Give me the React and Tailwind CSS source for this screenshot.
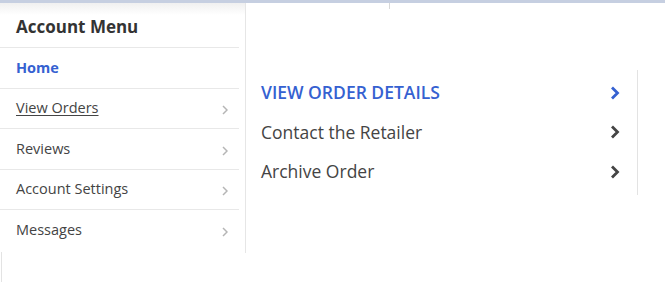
import React from "react";

const menu = [
  { label: "Home", active: true },
  { label: "View Orders", underline: true, arrow: true },
  { label: "Reviews", arrow: true },
  { label: "Account Settings", arrow: true },
  { label: "Messages", arrow: true },
];

const actions = [
  { label: "VIEW ORDER DETAILS", active: true },
  { label: "Contact the Retailer" },
  { label: "Archive Order" },
];

function SmallChevron() {
  return (
    <svg width="6" height="10" viewBox="0 0 6 10" className="mt-1">
      <path d="M1 1l4 4-4 4" fill="none" stroke="#b5b5b5" strokeWidth="1.5" />
    </svg>
  );
}

function BoldChevron({ color }) {
  return (
    <svg width="10" height="14" viewBox="0 0 10 14">
      <path d="M2 1.5l5.5 5.5-5.5 5.5" fill="none" stroke={color} strokeWidth="2.8" />
    </svg>
  );
}

export default function App() {
  return (
    <div
      className="relative w-[665px] h-[282px] bg-white overflow-hidden text-[#444]"
      style={{ fontFamily: '"Open Sans", sans-serif' }}
    >
      {/* top strip */}
      <div className="h-[3px] bg-[#c6cfe1]" />
      <div className="absolute left-[389px] top-[3px] w-px h-[6px] bg-[#d8d8d8]" />

      <div className="flex">
        {/* sidebar */}
        <aside className="w-[246px] h-[250px] border-r border-[#e6e6e6] bg-gradient-to-b from-[#f0f0f0] via-white to-white bg-[length:100%_24px] bg-no-repeat pr-[6px]">
          <div className="h-[44px] flex items-center pt-[3px] pl-4 text-[17px] font-bold text-[#333]">
            Account Menu
          </div>
          <ul>
            {menu.map((m) => (
              <li
                key={m.label}
                className="h-[40.5px] border-t border-[#e8e8e8] flex items-center justify-between pl-4 pr-[11px] text-[14.5px]"
              >
                <span
                  className={
                    m.active
                      ? "text-[#3561d1] font-bold"
                      : m.underline
                      ? "underline underline-offset-2"
                      : ""
                  }
                >
                  {m.label}
                </span>
                {m.arrow && <SmallChevron />}
              </li>
            ))}
          </ul>
        </aside>

        {/* actions */}
        <main className="flex-1 pt-[67px]">
          <ul className="w-[392px] border-r border-[#e3e3e3] py-[3px]">
            {actions.map((a) => (
              <li
                key={a.label}
                className="h-[39.5px] flex items-center justify-between pl-[15px] pr-[17px] text-[17.5px]"
              >
                <span className={a.active ? "text-[#3561d1] font-semibold -mt-px" : "text-[#444] -mt-px"}>
                  {a.label}
                </span>
                <BoldChevron color={a.active ? "#3561d1" : "#444"} />
              </li>
            ))}
          </ul>
        </main>
      </div>

      <div className="absolute left-px top-[252px] w-px h-[30px] bg-[#e3e3e3]" />
    </div>
  );
}
